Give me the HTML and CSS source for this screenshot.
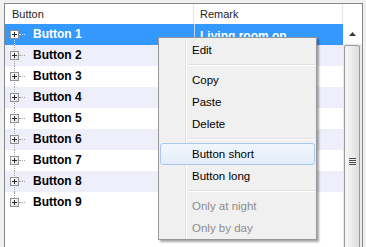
FILE: index.html
```html
<!DOCTYPE html>
<html lang="en">
<head>
  <meta charset="UTF-8" />
  <title>Buttons</title>
  <link rel="stylesheet" href="styles.css">
</head>
<body>
  <div class="tree">
    <div class="main">
      <div class="header">
        <div class="hcell col-name">Button</div>
        <div class="hcell col-remark">Remark</div>
      </div>
      <div class="rows">
        <div class="row selected first">
          <div class="expander"><span class="plus"></span></div>
          <div class="name">Button 1</div>
          <div class="remark">Living room on</div>
        </div>
        <div class="row alt">
          <div class="expander"><span class="plus"></span></div>
          <div class="name">Button 2</div>
          <div class="remark"></div>
        </div>
        <div class="row">
          <div class="expander"><span class="plus"></span></div>
          <div class="name">Button 3</div>
          <div class="remark"></div>
        </div>
        <div class="row alt">
          <div class="expander"><span class="plus"></span></div>
          <div class="name">Button 4</div>
          <div class="remark"></div>
        </div>
        <div class="row">
          <div class="expander"><span class="plus"></span></div>
          <div class="name">Button 5</div>
          <div class="remark"></div>
        </div>
        <div class="row alt">
          <div class="expander"><span class="plus"></span></div>
          <div class="name">Button 6</div>
          <div class="remark"></div>
        </div>
        <div class="row">
          <div class="expander"><span class="plus"></span></div>
          <div class="name">Button 7</div>
          <div class="remark"></div>
        </div>
        <div class="row alt">
          <div class="expander"><span class="plus"></span></div>
          <div class="name">Button 8</div>
          <div class="remark"></div>
        </div>
        <div class="row last">
          <div class="expander"><span class="plus"></span></div>
          <div class="name">Button 9</div>
          <div class="remark"></div>
        </div>
      </div>
    </div>
    <div class="vscroll">
      <div class="vs-head"></div>
      <div class="vs-up">
        <svg width="7" height="4" viewBox="0 0 7 4"><path d="M0 4 L3.5 0 L7 4 Z" fill="#3b3b3b"/></svg>
      </div>
      <div class="vs-thumb"><span class="grip"></span></div>
    </div>
  </div>

  <div class="menu">
    <div class="item">Edit</div>
    <div class="sep"></div>
    <div class="item">Copy</div>
    <div class="item">Paste</div>
    <div class="item">Delete</div>
    <div class="sep"></div>
    <div class="item hover">Button short</div>
    <div class="item">Button long</div>
    <div class="sep"></div>
    <div class="item disabled">Only at night</div>
    <div class="item disabled">Only by day</div>
  </div>
</body>
</html>
```

FILE: styles.css
```css
body {
  margin: 0;
  background-color: #f0f0f0;
  font-family: 'Liberation Sans', Arial, sans-serif;
  color: #000;
  overflow: hidden;
}

.tree {
  display: flex;
  box-sizing: border-box;
  width: 359px;
  height: 260px;
  margin: 3px 0 0 4px;
  border: 1px solid #828790;
  background-color: #fff;
}

.main {
  width: 338px;
}

.header {
  display: flex;
  height: 20px;
  background-color: #fff;
  border-right: 1px solid #e5e5e5;
  box-sizing: border-box;
}

.hcell {
  box-sizing: border-box;
  font-size: 11px;
  line-height: 21px;
  color: #1e1e1e;
}

.col-name {
  width: 189px;
  padding-left: 7px;
  border-right: 1px solid #e5e5e5;
}

.col-remark {
  flex: 1;
  padding-left: 6px;
}

.row {
  display: flex;
  height: 21px;
  font-size: 12px;
  font-weight: bold;
  line-height: 21px;
}

.row.alt {
  background-color: #efeffc;
}

.row.selected {
  background-color: #3399ff;
  color: #fff;
}

.expander {
  position: relative;
  width: 28px;
}

/* dotted tree lines */
.expander::before {
  content: '';
  position: absolute;
  left: 9px;
  top: 0;
  bottom: 0;
  border-left: 1px dotted #a0a0a0;
}

.row.first .expander::before {
  top: 10px;
}

.row.last .expander::before {
  bottom: 11px;
}

.expander::after {
  content: '';
  position: absolute;
  left: 14px;
  width: 6px;
  top: 10px;
  border-top: 1px dotted #a0a0a0;
}

.plus {
  position: absolute;
  left: 5px;
  top: 6px;
  box-sizing: border-box;
  width: 9px;
  height: 9px;
  border: 1px solid #919191;
  background: linear-gradient(135deg, #ffffff, #e2e2e2);
  z-index: 1;
}

.plus::before {
  content: '';
  position: absolute;
  left: 1px;
  top: 3px;
  width: 5px;
  height: 1px;
  background-color: #2b2b2b;
}

.plus::after {
  content: '';
  position: absolute;
  left: 3px;
  top: 1px;
  width: 1px;
  height: 5px;
  background-color: #2b2b2b;
}

.row.selected .expander::before,
.row.selected .expander::after {
  border-color: #d5e8ff;
}

.row.selected .plus {
  background: #fff;
}

.name {
  width: 161px;
  white-space: nowrap;
}

.remark {
  flex: 1;
  padding-left: 6px;
  white-space: nowrap;
}

.row.selected .remark {
  border-left: 1px solid #bcdcff;
  padding-left: 5px;
  line-height: 24px;
}

.vscroll {
  width: 19px;
  background-color: #eaeaea;
}

.vs-head {
  height: 20px;
  background-color: #fff;
}

.vs-up {
  display: flex;
  align-items: center;
  justify-content: center;
  height: 20px;
  background-color: #fff;
}

.vs-thumb {
  display: flex;
  align-items: flex-start;
  justify-content: center;
  box-sizing: border-box;
  height: 260px;
  margin: 1px 2px 0 1px;
  padding-top: 112px;
  border: 1px solid #9a9a9a;
  border-radius: 2px;
  background: linear-gradient(to right, #f6f6f6, #ececec 50%, #dcdcdc);
}

.grip {
  display: block;
  width: 7px;
  height: 7px;
  background: repeating-linear-gradient(to bottom, #4a4a4a 0, #4a4a4a 1px, #ececec 1px, #ececec 2px);
}

.menu {
  position: absolute;
  left: 158px;
  top: 37px;
  box-sizing: border-box;
  width: 159px;
  padding: 1px 1px 0 1px;
  border: 1px solid #979797;
  background: linear-gradient(to right, #f0f0f0 26px, #e2e3e3 26px, #e2e3e3 27px, #ffffff 27px, #ffffff 28px, #f0f0f0 28px);
  box-shadow: 2px 2px 2px rgba(0, 0, 0, 0.35);
  font-size: 11.5px;
}

.item {
  box-sizing: border-box;
  height: 22px;
  line-height: 22px;
  padding-left: 32px;
  color: #000;
}

.item.hover {
  border: 1px solid #a8c8ef;
  border-radius: 3px;
  padding-left: 31px;
  line-height: 20px;
  background: linear-gradient(to bottom, #f1f6fd, #e3edfa);
}

.item.disabled {
  color: #8d8d8d;
}

.sep {
  height: 8px;
  margin-left: 29px;
  background: linear-gradient(to bottom, transparent 3px, #e0e0e0 3px, #e0e0e0 4px, #ffffff 4px, #ffffff 5px, transparent 5px);
}
```
